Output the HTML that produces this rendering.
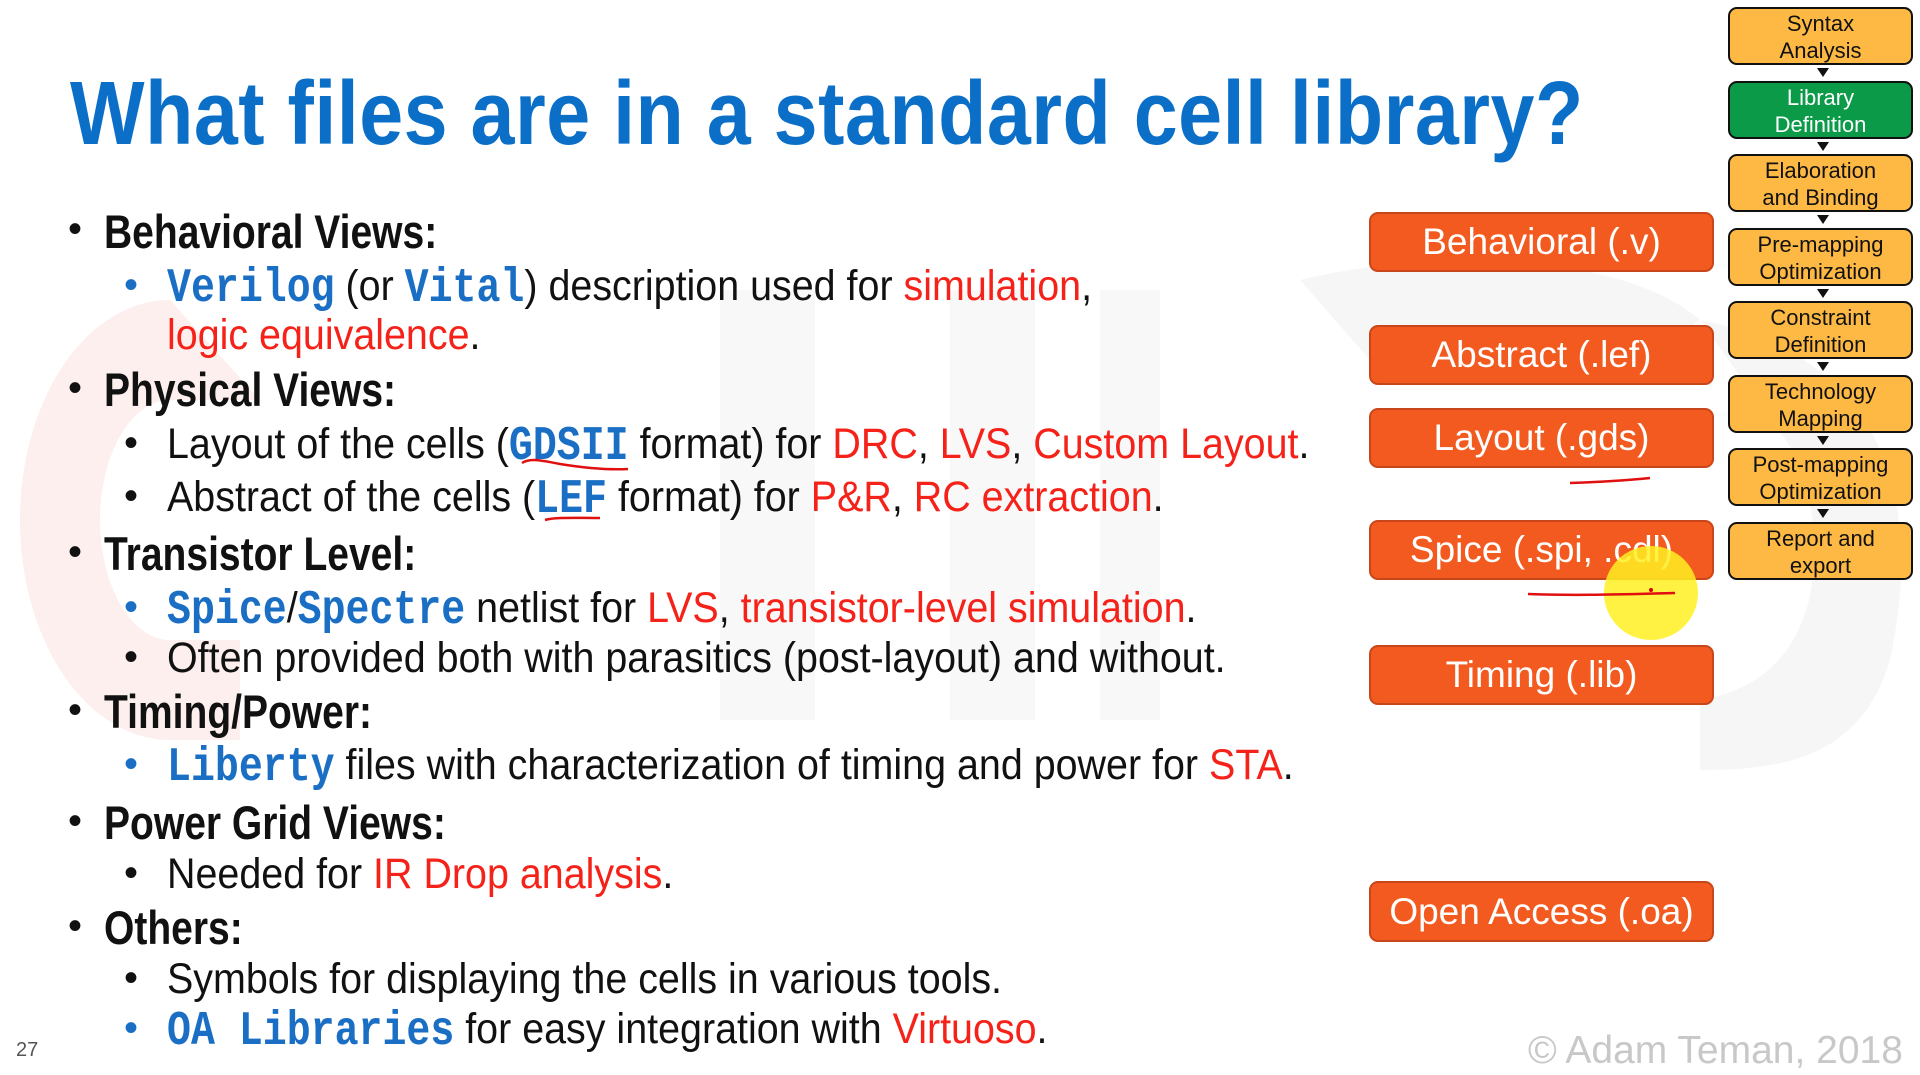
<!DOCTYPE html>
<html><head><meta charset="utf-8"><style>
*{margin:0;padding:0;box-sizing:border-box}
body{width:1920px;height:1075px;background:#fff;position:relative;overflow:hidden;font-family:"Liberation Sans",sans-serif}
.wm{position:absolute}
.title{position:absolute;left:70px;top:61px;font-weight:bold;font-size:79px;color:#0b6fc8;white-space:nowrap;transform:scaleY(1.14);transform-origin:0 0;letter-spacing:0.5px}
.l{position:absolute;white-space:nowrap;transform:scaleX(.917);transform-origin:0 0;color:#111;font-size:43px}
.h{font-weight:bold;font-size:47px;transform:scaleX(.83)}
.b{position:absolute;font-size:40px;color:#111}
.bb{color:#1a6fc4}
.c{font-family:"Liberation Mono",monospace;font-weight:bold;color:#1a6fc4;font-size:43.5px;display:inline-block;transform:scaleY(1.1)}
.r{color:#f5221a}
.ob{position:absolute;left:1369px;width:345px;background:#f35a1f;border:2px solid #c8471a;border-radius:9px;color:#fff;font-size:37px;text-align:center;display:flex;align-items:center;justify-content:center;white-space:nowrap}
.fb{position:absolute;left:1728px;width:185px;height:58px;background:#fdb943;border:2px solid #111;border-radius:9px;font-size:22px;line-height:27px;text-align:center;color:#111;padding-top:1px}
.ar{position:absolute;left:1817px;width:8px;height:0;border-left:6px solid transparent;border-right:6px solid transparent;border-top:9px solid #111}
</style></head><body>
<svg class="wm" style="left:0;top:0" width="1920" height="1075">
<path d="M170 300 A150 220 0 1 0 170 740 L 240 740 L 240 640 L170 640 A 70 120 0 1 1 170 400 L 260 400 Z" fill="#fcefed"/>
<rect x="720" y="290" width="95" height="430" fill="#f8f8f8"/>
<rect x="950" y="290" width="85" height="430" fill="#f8f8f8"/>
<rect x="1100" y="290" width="60" height="430" fill="#f8f8f8"/>
<path d="M1300 280 C1420 250 1620 250 1700 320 L1620 380 C1560 330 1420 330 1370 360 Z" fill="#f6f6f6"/>
<path d="M1700 320 C1900 360 1920 520 1890 660 C1860 760 1780 770 1700 770 L1700 700 C1820 680 1830 560 1800 460 Z" fill="#f6f6f6"/>
</svg>
<div class="title">What files are in a standard cell library?</div>

<div class="b" style="left:68px;top:207px">•</div>
<div class="l h" style="left:104px;top:204px">Behavioral Views:</div>
<div class="b bb" style="left:124px;top:263px">•</div>
<div class="l" style="left:167px;top:262px"><span class="c">Verilog</span> (or <span class="c">Vital</span>) description used for <span class="r">simulation</span>,</div>
<div class="l r" style="left:167px;top:311px">logic equivalence<span style="color:#111">.</span></div>

<div class="b" style="left:68px;top:366px">•</div>
<div class="l h" style="left:104px;top:362px">Physical Views:</div>
<div class="b" style="left:124px;top:421px">•</div>
<div class="l" style="left:167px;top:420px">Layout of the cells (<span class="c">GDSII</span> format) for <span class="r">DRC</span>, <span class="r">LVS</span>, <span class="r">Custom Layout</span>.</div>
<div class="b" style="left:124px;top:474px">•</div>
<div class="l" style="left:167px;top:473px">Abstract of the cells (<span class="c">LEF</span> format) for <span class="r">P&amp;R</span>, <span class="r">RC extraction</span>.</div>

<div class="b" style="left:68px;top:530px">•</div>
<div class="l h" style="left:104px;top:526px">Transistor Level:</div>
<div class="b bb" style="left:124px;top:585px">•</div>
<div class="l" style="left:167px;top:584px"><span class="c">Spice</span>/<span class="c">Spectre</span> netlist for <span class="r">LVS</span>, <span class="r">transistor-level simulation</span>.</div>
<div class="b" style="left:124px;top:635px">•</div>
<div class="l" style="left:167px;top:634px">Often provided both with parasitics (post-layout) and without.</div>

<div class="b" style="left:68px;top:688px">•</div>
<div class="l h" style="left:104px;top:684px">Timing/Power:</div>
<div class="b bb" style="left:124px;top:742px">•</div>
<div class="l" style="left:167px;top:741px"><span class="c">Liberty</span> files with characterization of timing and power for <span class="r">STA</span>.</div>

<div class="b" style="left:68px;top:799px">•</div>
<div class="l h" style="left:104px;top:795px">Power Grid Views:</div>
<div class="b" style="left:124px;top:851px">•</div>
<div class="l" style="left:167px;top:850px">Needed for <span class="r">IR Drop analysis</span>.</div>

<div class="b" style="left:68px;top:904px">•</div>
<div class="l h" style="left:104px;top:900px">Others:</div>
<div class="b" style="left:124px;top:956px">•</div>
<div class="l" style="left:167px;top:955px">Symbols for displaying the cells in various tools.</div>
<div class="b bb" style="left:124px;top:1006px">•</div>
<div class="l" style="left:167px;top:1005px"><span class="c">OA Libraries</span> for easy integration with <span class="r">Virtuoso</span>.</div>

<div class="ob" style="top:212px;height:60px">Behavioral (.v)</div>
<div class="ob" style="top:325px;height:60px">Abstract (.lef)</div>
<div class="ob" style="top:408px;height:60px">Layout (.gds)</div>
<div class="ob" style="top:520px;height:60px">Spice (.spi, .cdl)</div>
<div class="ob" style="top:645px;height:60px">Timing (.lib)</div>
<div class="ob" style="top:881px;height:61px">Open Access (.oa)</div>

<div class="fb" style="top:7px">Syntax<br>Analysis</div>
<div class="fb" style="top:81px;background:#0a9a48;color:#fff">Library<br>Definition</div>
<div class="fb" style="top:154px">Elaboration<br>and Binding</div>
<div class="fb" style="top:228px">Pre-mapping<br>Optimization</div>
<div class="fb" style="top:301px">Constraint<br>Definition</div>
<div class="fb" style="top:375px">Technology<br>Mapping</div>
<div class="fb" style="top:448px">Post-mapping<br>Optimization</div>
<div class="fb" style="top:522px">Report and<br>export</div>
<div class="ar" style="top:68px"></div><div class="ar" style="top:142px"></div><div class="ar" style="top:215px"></div><div class="ar" style="top:289px"></div><div class="ar" style="top:362px"></div><div class="ar" style="top:436px"></div><div class="ar" style="top:509px"></div>

<svg class="wm" style="left:0;top:0" width="1920" height="1075">
<circle cx="1651" cy="593" r="47" fill="#fff022" opacity="0.85"/>
<path d="M522 463 C530 458 540 460 560 464 C585 468 610 470 628 469" stroke="#e01010" stroke-width="2.5" fill="none"/>
<path d="M545 520 C555 517 575 518 600 518" stroke="#e01010" stroke-width="2.5" fill="none"/>
<path d="M1570 483 C1600 482 1630 480 1650 478" stroke="#e01010" stroke-width="2.5" fill="none"/>
<path d="M1528 594 C1580 596 1630 594 1675 593" stroke="#e01010" stroke-width="2.5" fill="none"/>
<circle cx="1651" cy="590" r="2" fill="#d00"/>
</svg>

<div style="position:absolute;left:16px;top:1039px;font-size:20px;color:#555">27</div>
<div style="position:absolute;left:1528px;top:1029px;font-size:39px;color:#c8c8c8;white-space:nowrap">© Adam Teman, 2018</div>
</body></html>
